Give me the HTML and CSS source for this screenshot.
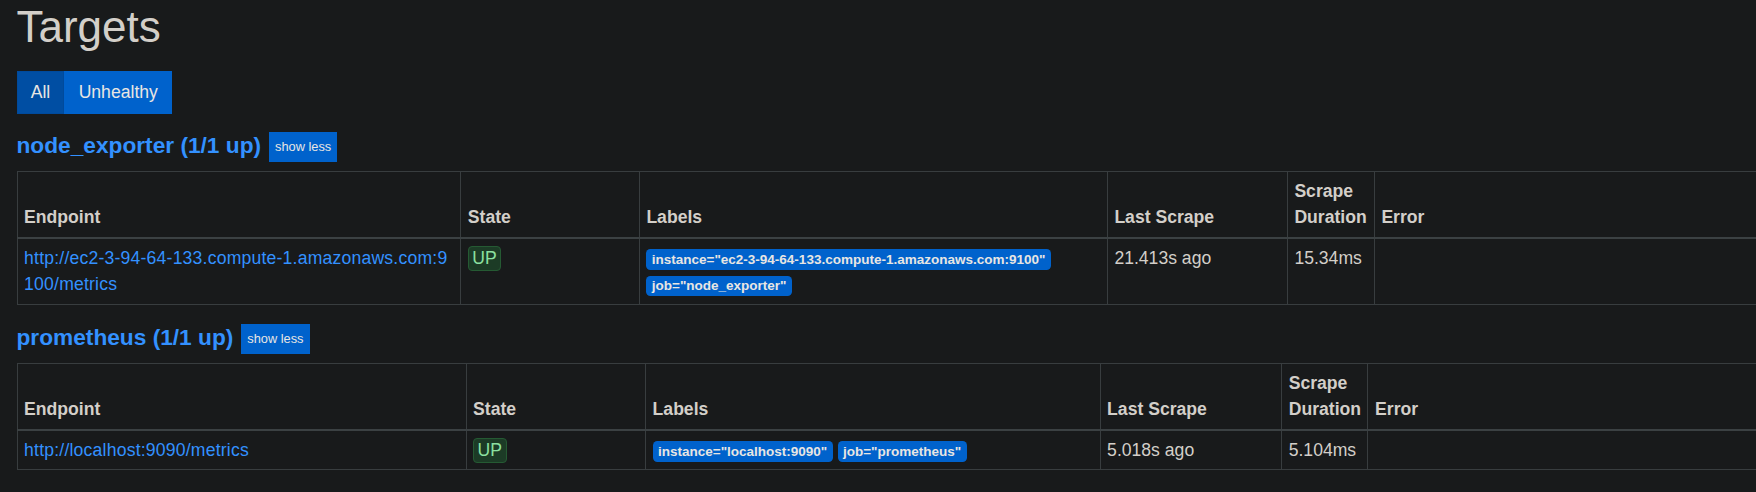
FILE: index.html
```html
<!DOCTYPE html>
<html lang="en">
<head>
<meta charset="utf-8">
<title>Targets</title>
<link rel="stylesheet" href="styles.css">
</head>
<body>
<div class="page">
  <h1 class="title">Targets</h1>
  <div class="filters">
    <div class="btn-group">
      <button class="btn active">All</button>
      <button class="btn">Unhealthy</button>
    </div>
  </div>

  <section class="pool pool-first">
    <div class="pool-head">
      <a class="pool-name" href="#node_exporter">node_exporter (1/1 up)</a>
      <button class="btn-xs">show less</button>
    </div>
    <table class="targets t1">
      <colgroup>
        <col class="c-endpoint"><col class="c-state"><col class="c-labels"><col class="c-last"><col class="c-dur"><col class="c-error">
      </colgroup>
      <thead>
        <tr><th>Endpoint</th><th>State</th><th>Labels</th><th>Last Scrape</th><th>Scrape Duration</th><th>Error</th></tr>
      </thead>
      <tbody>
        <tr>
          <td><a class="endpoint" href="#">http://ec2-3-94-64-133.compute-1.amazonaws.com:9100/metrics</a></td>
          <td><span class="health">UP</span></td>
          <td><span class="label">instance="ec2-3-94-64-133.compute-1.amazonaws.com:9100"</span> <span class="label">job="node_exporter"</span></td>
          <td>21.413s ago</td>
          <td>15.34ms</td>
          <td></td>
        </tr>
      </tbody>
    </table>
  </section>

  <section class="pool">
    <div class="pool-head">
      <a class="pool-name" href="#prometheus">prometheus (1/1 up)</a>
      <button class="btn-xs">show less</button>
    </div>
    <table class="targets t2">
      <colgroup>
        <col class="c-endpoint"><col class="c-state"><col class="c-labels"><col class="c-last"><col class="c-dur"><col class="c-error">
      </colgroup>
      <thead>
        <tr><th>Endpoint</th><th>State</th><th>Labels</th><th>Last Scrape</th><th>Scrape Duration</th><th>Error</th></tr>
      </thead>
      <tbody>
        <tr>
          <td><a class="endpoint" href="#">http://localhost:9090/metrics</a></td>
          <td><span class="health">UP</span></td>
          <td><span class="label">instance="localhost:9090"</span> <span class="label">job="prometheus"</span></td>
          <td>5.018s ago</td>
          <td>5.104ms</td>
          <td></td>
        </tr>
      </tbody>
    </table>
  </section>
</div>
</body>
</html>
```
FILE: styles.css
```css
html, body {
  margin: 0;
  background: #181a1b;
  overflow: hidden;
}

body {
  font-family: "Liberation Sans", Arial, sans-serif;
  font-size: 17.6px;
  line-height: 1.5;
  color: #d3cfc9;
}

.page {
  padding: 1.3px 16.5px 0;
}

.title {
  font-size: 44px;
  font-weight: 400;
  line-height: 1.2;
  margin: 0 0 16.9px;
}

.filters {
  display: flex;
}

.btn-group {
  display: flex;
}

.btn {
  font: inherit;
  color: #e8e6e3;
  background: #0062cc;
  border: 1px solid #0062cc;
  padding: 7.1px 13.2px;
  line-height: 26.4px;
  border-radius: 0;
  margin: 0;
  cursor: pointer;
}

.btn.active {
  background: #004ea3;
  border-color: #004a9c;
}

.pool-head {
  display: flex;
  align-items: flex-start;
  gap: 8px;
  margin-top: 18.7px;
  margin-bottom: 9.4px;
}

.pool-name {
  font-size: 22.7px;
  font-weight: 700;
  line-height: 27.2px;
  color: #3391ff;
  text-decoration: none;
}

.btn-xs {
  font-family: inherit;
  font-size: 12.8px;
  line-height: 19.8px;
  padding: 4.8px 6px;
  border: 0;
  border-radius: 0;
  background: #0062cc;
  color: #e8e6e3;
  margin: 0;
}

.pool + .pool .pool-head {
  margin-top: 0;
}

.targets {
  border-collapse: collapse;
  table-layout: fixed;
  width: 1800px;
  margin-bottom: 19.5px;
}

.targets th,
.targets td {
  border: 1px solid #383d3f;
  padding: 6px 6.6px;
  text-align: left;
}

.targets th {
  vertical-align: bottom;
  border-bottom: 2px solid #3b4143;
  font-weight: 700;
}

.targets td {
  vertical-align: top;
}

.t1 .c-endpoint { width: 443.7px; }
.t1 .c-state { width: 178.6px; }
.t1 .c-labels { width: 468px; }
.t1 .c-last { width: 180px; }
.t1 .c-dur { width: 87px; }

.t2 .c-endpoint { width: 449px; }
.t2 .c-state { width: 179.5px; }
.t2 .c-labels { width: 454.5px; }
.t2 .c-last { width: 181.6px; }
.t2 .c-dur { width: 86.4px; }

.endpoint {
  color: #3391ff;
  text-decoration: none;
  word-break: break-all;
  letter-spacing: 0.2px;
}

.health {
  display: inline-block;
  line-height: 23.4px;
  padding: 0 3.5px;
  border: 1px solid #255a33;
  border-radius: 4px;
  background: #1c3b26;
  color: #8ce0a0;
}

.label {
  display: inline-block;
  font-size: 13.5px;
  font-weight: 700;
  line-height: 1;
  padding: 3.4px 5.4px;
  border-radius: 4.4px;
  background: #0062cc;
  color: #e8e6e3;
  white-space: nowrap;
  vertical-align: baseline;
}
```
